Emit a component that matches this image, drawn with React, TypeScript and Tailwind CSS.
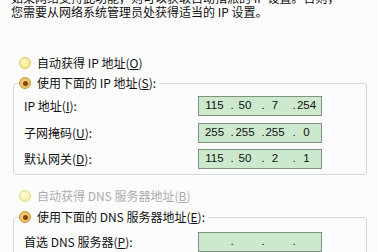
import React from "react";

const cjk = { fontFamily: '"Noto Sans CJK SC", "Noto Sans", sans-serif' };

function Radio({ checked, disabled }: { checked?: boolean; disabled?: boolean }) {
  if (checked) {
    return (
      <span className="flex h-[12px] w-[12px] shrink-0 items-center justify-center rounded-full border border-[#c99a3c] bg-[radial-gradient(circle_at_50%_50%,#ffd890,#e8b04a)]">
        <span className="h-[5px] w-[5px] rounded-full bg-[#7a4810]" />
      </span>
    );
  }
  return (
    <span
      className={
        disabled
          ? "h-[12px] w-[12px] shrink-0 rounded-full border border-[#e2d98a] bg-[radial-gradient(circle_at_45%_40%,#fffde0,#f3ea80)]"
          : "h-[12px] w-[12px] shrink-0 rounded-full border border-[#d9c95e] bg-[radial-gradient(circle_at_45%_40%,#fffbd0,#efe064)]"
      }
    />
  );
}

function IpBox({ v }: { v: string[] }) {
  return (
    <div
      className="flex h-[20px] w-[124px] items-center border border-[#7f917f] bg-[#cce8cd] text-[11.5px] text-[#111]"
      style={{ fontFamily: '"Liberation Sans", Arial, sans-serif' }}
    >
      <span className="w-[31px] text-center">{v[0]}</span>
      <span className="w-[4px] text-center">.</span>
      <span className="w-[22px] text-center">{v[1]}</span>
      <span className="ml-[5px] w-[4px] text-center">.</span>
      <span className="w-[20px] text-center">{v[2]}</span>
      <span className="ml-[7px] w-[4px] text-center">.</span>
      <span className="w-[21px] text-center">{v[3]}</span>
    </div>
  );
}

function Row({ label, k, v }: { label: string; k: string; v: string[] }) {
  return (
    <div className="flex h-[20px] items-center">
      <span className="w-[174px]">
        {label}(<u>{k}</u>):
      </span>
      <IpBox v={v} />
    </div>
  );
}

export default function App() {
  return (
    <div
      className="flex h-[252px] w-[378px] flex-col overflow-hidden bg-[#fcfcfc] text-[12px] text-[#111]"
      style={cjk}
    >
      <div className="mt-[-9px] pl-[11px] leading-[14px] whitespace-nowrap">
        <div>如果网络支持此功能，则可以获取自动指派的 IP 设置。否则，</div>
        <div>您需要从网络系统管理员处获得适当的 IP 设置。</div>
      </div>

      <div className="mt-[36px] ml-[19px] flex h-[16px] items-center gap-[6px]">
        <Radio />
        <span>
          自动获得 IP 地址(<u>O</u>)
        </span>
      </div>

      <fieldset className="mt-[4px] ml-[13px] w-[354px] rounded-[3px] border border-[#d6d6d6] p-0">
        <legend className="ml-[5px] flex h-[16px] items-center gap-[6px] pr-[3px]">
          <Radio checked />
          <span>
            使用下面的 IP 地址(<u>S</u>):
          </span>
        </legend>
        <div className="flex flex-col gap-[6.5px] pt-[5px] pb-[5px] pl-[10px]">
          <Row label="IP 地址" k="I" v={["115", "50", "7", "254"]} />
          <Row label="子网掩码" k="U" v={["255", "255", "255", "0"]} />
          <Row label="默认网关" k="D" v={["115", "50", "2", "1"]} />
        </div>
      </fieldset>

      <div className="mt-[13px] ml-[19px] flex h-[16px] items-center gap-[6px] text-[#acacac]">
        <Radio disabled />
        <span>
          自动获得 DNS 服务器地址(<u>B</u>)
        </span>
      </div>

      <fieldset className="mt-[5px] ml-[13px] w-[354px] rounded-[3px] border border-[#d6d6d6] p-0">
        <legend className="ml-[5px] flex h-[16px] items-center gap-[6px] pr-[3px]">
          <Radio checked />
          <span>
            使用下面的 DNS 服务器地址(<u>E</u>):
          </span>
        </legend>
        <div className="flex flex-col gap-[6.5px] pt-[7px] pb-[5px] pl-[10px]">
          <Row label="首选 DNS 服务器" k="P" v={["", "", "", ""]} />
        </div>
      </fieldset>
    </div>
  );
}
